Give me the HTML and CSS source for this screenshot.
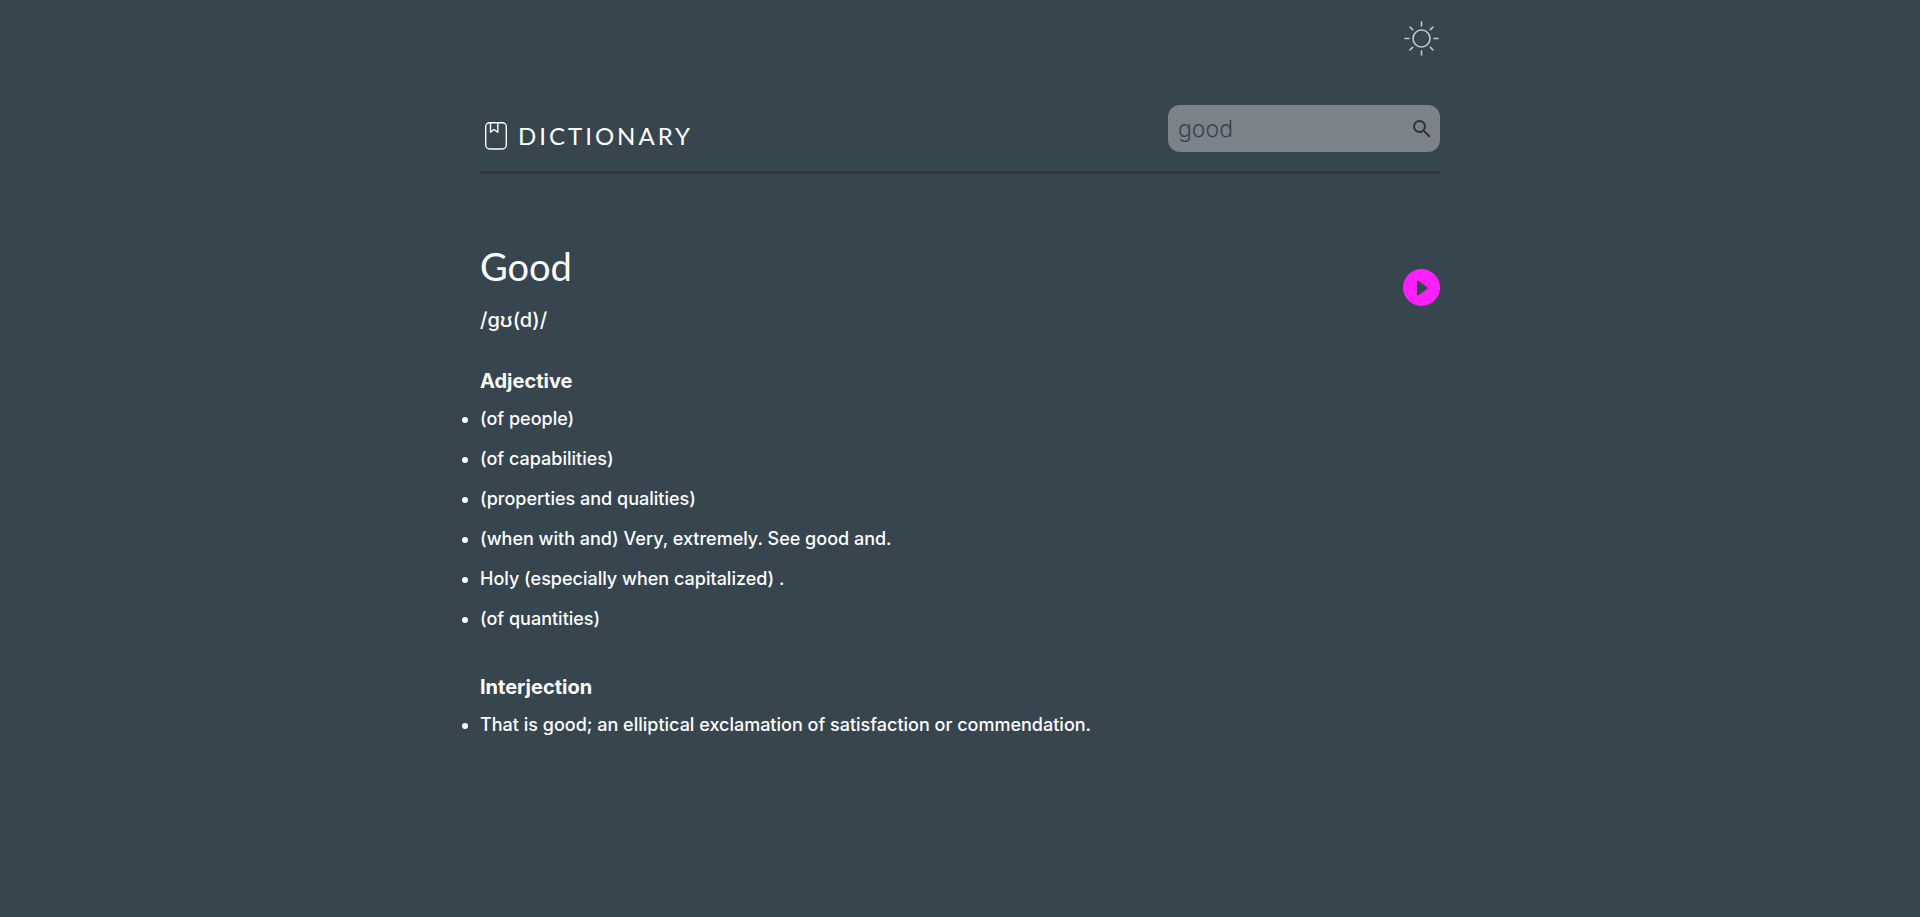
FILE: index.html
```html
<!DOCTYPE html>
<html lang="en">
<head>
<meta charset="utf-8">
<meta name="viewport" content="width=device-width, initial-scale=1">
<title>Dictionary</title>
<link rel="stylesheet" href="styles.css">
</head>
<body>
<div class="page">
  <div class="toolbar">
    <button class="icon-button theme-toggle" type="button" aria-label="Switch theme">
      <svg width="37" height="37" viewBox="0 0 37 37" fill="none" stroke="currentColor" stroke-width="1.6" stroke-linecap="round">
        <circle cx="18.5" cy="18.5" r="8.5"/>
        <path d="M18.5 2v4M18.5 31v4M2 18.5h4M31 18.5h4M7 7l2.6 2.6M27.4 27.4l2.6 2.6M30 7l-2.6 2.6M9.6 27.4l-2.6 2.6"/>
      </svg>
    </button>
  </div>
  <header class="header">
    <h1 class="brand">
      <svg width="32" height="32" viewBox="0 0 32 32" fill="none" stroke="currentColor" stroke-width="1.4" stroke-linejoin="round" aria-hidden="true">
        <rect x="5.7" y="2.7" width="20.6" height="26.3" rx="4"/>
        <path d="M10.5 3v9.3l3.5-2.8 3.8 2.8V3"/>
      </svg>
      <span class="brand-name">DICTIONARY</span>
    </h1>
    <form class="search">
      <input class="search-input" type="text" value="good" aria-label="Search a word">
      <button class="icon-button search-button" type="submit" aria-label="Search">
        <svg width="24" height="24" viewBox="0 0 24 24" fill="currentColor"><path d="M15.5 14h-.79l-.28-.27A6.471 6.471 0 0 0 16 9.5 6.5 6.5 0 1 0 9.5 16c1.61 0 3.09-.59 4.23-1.57l.27.28v.79l5 4.99L20.49 19l-4.99-5zm-6 0C7.01 14 5 11.99 5 9.5S7.01 5 9.5 5 14 7.01 14 9.5 11.99 14 9.5 14z"/></svg>
      </button>
    </form>
  </header>
  <main>
    <section class="entry">
      <div>
        <h2 class="word">Good</h2>
        <p class="phonetic">/ɡʊ(d)/</p>
      </div>
      <button class="icon-button play" type="button" aria-label="Play pronunciation">
        <svg width="37" height="37" viewBox="0 0 37 37"><circle cx="18.5" cy="18.5" r="18.5" fill="#ff20ff"/><path d="M15.2 13v12l8-6z" fill="#37454f" stroke="#37454f" stroke-width="2.5" stroke-linejoin="round"/></svg>
      </button>
    </section>
    <section class="meaning">
      <h3 class="part">Adjective</h3>
      <ul class="definitions">
        <li>(of people)</li>
        <li>(of capabilities)</li>
        <li>(properties and qualities)</li>
        <li>(when with and) Very, extremely. See good and.</li>
        <li>Holy (especially when capitalized) .</li>
        <li>(of quantities)</li>
      </ul>
    </section>
    <section class="meaning">
      <h3 class="part">Interjection</h3>
      <ul class="definitions">
        <li>That is good; an elliptical exclamation of satisfaction or commendation.</li>
      </ul>
    </section>
  </main>
</div>
</body>
</html>
```
FILE: styles.css
```css
* { box-sizing: border-box; }
body {
  margin: 0;
  background: #37454f;
  color: #fff;
  font-family: Inter, "Noto Sans", sans-serif;
  font-size: 18px;
  font-weight: 500;
}
h1, h2, h3, p, ul { margin: 0; padding: 0; }
svg { display: block; }
.page { width: 50%; margin: 0 auto; padding: 20px 0 40px; }
.icon-button { padding: 0; border: 0; background: none; cursor: pointer; }
.toolbar { display: flex; justify-content: flex-end; }
.theme-toggle { color: #bccdc2; }
.header {
  display: flex;
  justify-content: space-between;
  align-items: flex-end;
  margin-top: 48px;
  padding-bottom: 19px;
  border-bottom: 3px solid #333739;
}
.brand { display: flex; align-items: center; gap: 6px; }
.brand-name {
  font: 400 24px/30px Lato, sans-serif;
  letter-spacing: 3px;
}
.search {
  display: flex;
  align-items: center;
  width: 272px;
  height: 47px;
  padding: 0 6px 0 10px;
  border-radius: 12px;
  background: #7b8289;
}
.search-input {
  flex: 1;
  min-width: 0;
  padding: 0;
  border: 0;
  outline: 0;
  background: none;
  color: #37454f;
  font: 300 23px/32px Inter, sans-serif;
}
.search-button { color: #333; }
.entry {
  display: flex;
  justify-content: space-between;
  align-items: center;
  margin: 68px 0 33px;
}
.word { font: 400 38px/48px Lato, sans-serif; }
.phonetic { margin-top: 18px; font-size: 20px; line-height: 24px; }
.meaning { margin-top: 32px; }
.part { font-size: 20px; line-height: 32px; font-weight: 700; }
.definitions { margin-top: 2px; }
.definitions li { line-height: 40px; }
```
